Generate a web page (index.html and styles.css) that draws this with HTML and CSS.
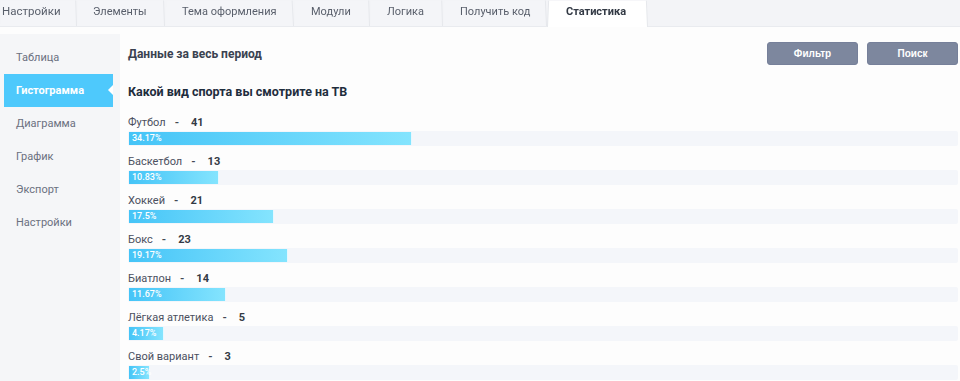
FILE: index.html
```html
<!DOCTYPE html>
<html lang="ru">
<head>
<meta charset="utf-8">
<title>Статистика</title>
<link rel="stylesheet" href="styles.css">
</head>
<body>
<nav class="tabs">
  <div class="tab t1">Настройки</div>
  <div class="tab t2">Элементы</div>
  <div class="tab t3">Тема оформления</div>
  <div class="tab t4">Модули</div>
  <div class="tab t5">Логика</div>
  <div class="tab t6">Получить код</div>
  <div class="tab t7 tab-active">Статистика</div>
</nav>
<div class="layout">
  <aside class="sidebar">
    <div class="side-item">Таблица</div>
    <div class="side-item side-active">Гистограмма</div>
    <div class="side-item">Диаграмма</div>
    <div class="side-item">График</div>
    <div class="side-item">Экспорт</div>
    <div class="side-item">Настройки</div>
  </aside>
  <main class="main">
    <div class="head">
      <h1 class="period">Данные за весь период</h1>
      <div class="buttons">
        <button class="btn">Фильтр</button>
        <button class="btn">Поиск</button>
      </div>
    </div>
    <h2 class="question">Какой вид спорта вы смотрите на ТВ</h2>
    <div class="rows">
      <div class="row">
        <div class="label"><span class="name">Футбол</span><span class="dash">-</span><span class="count">41</span></div>
        <div class="track"><div class="fill" style="width:34.17%">34.17%</div></div>
      </div>
      <div class="row">
        <div class="label"><span class="name">Баскетбол</span><span class="dash">-</span><span class="count">13</span></div>
        <div class="track"><div class="fill" style="width:10.83%">10.83%</div></div>
      </div>
      <div class="row">
        <div class="label"><span class="name">Хоккей</span><span class="dash">-</span><span class="count">21</span></div>
        <div class="track"><div class="fill" style="width:17.5%">17.5%</div></div>
      </div>
      <div class="row">
        <div class="label"><span class="name">Бокс</span><span class="dash">-</span><span class="count">23</span></div>
        <div class="track"><div class="fill" style="width:19.17%">19.17%</div></div>
      </div>
      <div class="row">
        <div class="label"><span class="name">Биатлон</span><span class="dash">-</span><span class="count">14</span></div>
        <div class="track"><div class="fill" style="width:11.67%">11.67%</div></div>
      </div>
      <div class="row">
        <div class="label"><span class="name">Лёгкая атлетика</span><span class="dash">-</span><span class="count">5</span></div>
        <div class="track"><div class="fill" style="width:4.17%">4.17%</div></div>
      </div>
      <div class="row">
        <div class="label"><span class="name">Свой вариант</span><span class="dash">-</span><span class="count">3</span></div>
        <div class="track"><div class="fill" style="width:2.5%">2.5%</div></div>
      </div>
    </div>
  </main>
</div>
</body>
</html>
```

FILE: styles.css
```css
* { box-sizing: border-box; }
html, body { margin: 0; padding: 0; }
body {
  font-family: Roboto, "Liberation Sans", sans-serif;
  background: #fdfdfd;
  color: #4b5060;
  width: 960px;
  height: 381px;
  overflow: hidden;
}

.tabs {
  display: flex;
  height: 27px;
  background: #f3f4f7;
  border-bottom: 1px solid #e9ebef;
  position: relative;
  z-index: 0;
}
.tab {
  position: relative;
  flex: none;
  height: 26px;
  padding-left: 17px;
  font-size: 11px;
  line-height: 23px;
  color: #595f6b;
  white-space: nowrap;
}
.tab::before {
  content: "";
  position: absolute;
  inset: 0;
  border-right: 1px solid #e6e8ec;
  background: #f4f5f8;
  transform: perspective(40px) rotateX(2deg);
  transform-origin: bottom;
  z-index: -1;
}
.t1 { width: 77px; padding-left: 2px; font-size: 11.5px; }
.t2 { width: 88px; padding-left: 16px; }
.t3 { width: 129px; }
.t4 { width: 76px; }
.t5 { width: 73px; }
.t6 { width: 104px; }
.t7 { width: 101px; padding-left: 19px; }
.tab-active {
  height: 27px;
  font-weight: 700;
  color: #333a45;
}
.tab-active::before {
  background: #ffffff;
  border-left: 1px solid #e6e8ec;
  border-right: 1px solid #e6e8ec;
}

.layout {
  display: flex;
  padding-top: 7px;
  height: 354px;
}
.sidebar {
  width: 120px;
  flex: none;
  background: #f5f6f8;
  padding-top: 7px;
}
.side-item {
  height: 33px;
  line-height: 33px;
  padding-left: 16px;
  font-size: 11px;
  color: #6b7080;
}
.side-active {
  position: relative;
  margin: 0 7px 0 4px;
  padding-left: 12px;
  background: #4ec9fc;
  color: #ffffff;
  font-weight: 700;
}
.side-active::after {
  content: "";
  position: absolute;
  right: 0;
  top: 11px;
  border-style: solid;
  border-width: 5px 5px 5px 0;
  border-color: transparent #ffffff transparent transparent;
}

.main {
  flex: 1;
  margin-left: 8px;
  padding: 8px 2px 0 0;
}
.head {
  display: flex;
  justify-content: space-between;
  align-items: center;
  height: 23px;
}
.period {
  margin: 0;
  font-size: 12px;
  font-weight: 700;
  color: #3a4250;
}
.buttons { display: flex; gap: 9px; }
.btn {
  width: 91px;
  height: 23px;
  border: 1px solid #76809a;
  border-radius: 3px;
  background: #7d879e;
  color: #ffffff;
  font-family: "Liberation Sans", Arial, sans-serif;
  font-size: 10px;
  font-weight: 700;
  padding: 0;
}
.question {
  margin: 19px 0 0;
  font-size: 12.5px;
  line-height: 16px;
  font-weight: 700;
  color: #1f2d3d;
}
.rows { margin-top: 15px; }
.row { margin-bottom: 8px; }
.label {
  height: 16px;
  line-height: 16px;
  font-size: 11px;
}
.name { color: #4b5060; }
.dash { padding: 0 12px 0 9px; font-weight: 700; color: #444a55; }
.count { font-weight: 700; color: #333a45; }
.track {
  height: 15px;
  padding: 1px;
  background: #f4f6fa;
  border-radius: 2px;
}
.fill {
  height: 13px;
  background: linear-gradient(90deg, #45c4f7 0%, #84e4fe 100%);
  border-right: 1px solid #e6f8ff;
  color: #ffffff;
  font-size: 9px;
  font-weight: 500;
  line-height: 13px;
  padding-left: 3px;
  white-space: nowrap;
}
```
